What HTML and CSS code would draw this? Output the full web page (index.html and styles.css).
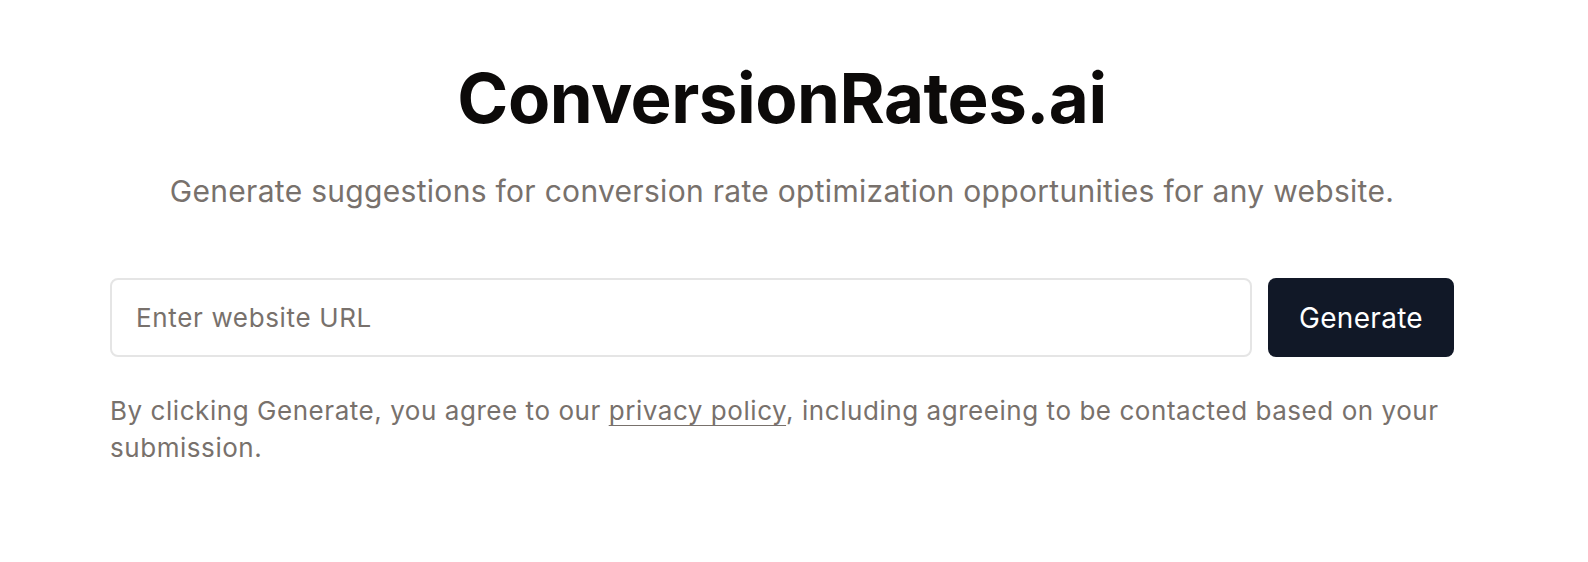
FILE: index.html
```html
<!DOCTYPE html>
<html lang="en">
<head>
<meta charset="utf-8">
<title>ConversionRates.ai</title>
<link rel="stylesheet" href="styles.css">
</head>
<body>
<main class="page">
  <h1 class="title">ConversionRates.ai</h1>
  <p class="subtitle">Generate suggestions for conversion rate optimization opportunities for any website.</p>
  <form class="form">
    <input class="url-input" type="text" placeholder="Enter website URL">
    <button class="btn" type="button">Generate</button>
  </form>
  <p class="note">By clicking Generate, you agree to our <a class="link" href="#">privacy policy</a>, including agreeing to be contacted based on your submission.</p>
</main>
</body>
</html>
```

FILE: styles.css
```css
* { box-sizing: border-box; }
html, body { margin: 0; padding: 0; background: #ffffff; }
body {
  font-family: Inter, "Noto Sans", sans-serif;
  color: #78716c;
}
.page {
  width: 1344px;
  margin-left: 110px;
  padding-top: 58px;
  display: flex;
  flex-direction: column;
}
.title {
  margin: 0;
  text-align: center;
  font-size: 69px;
  line-height: 80px;
  font-weight: 700;
  color: #0c0a09;
  letter-spacing: -0.5px;
}
.subtitle {
  margin: 33px 0 0;
  text-align: center;
  font-size: 30px;
  line-height: 40px;
  letter-spacing: 0.3px;
  color: #78716c;
}
.form {
  margin-top: 67px;
  display: flex;
  gap: 16px;
}
.url-input {
  flex: 1;
  height: 79px;
  border: 2px solid #e5e5e5;
  border-radius: 8px;
  padding: 0 24px;
  font-family: inherit;
  font-size: 26px;
  letter-spacing: 0.65px;
  color: #1c1917;
  outline: none;
}
.url-input::placeholder { color: #78716c; }
.btn {
  width: 186px;
  height: 79px;
  border: none;
  border-radius: 8px;
  background: #111827;
  color: #ffffff;
  font-family: inherit;
  font-size: 28px;
  letter-spacing: 0.3px;
  font-weight: 400;
}
.note {
  margin: 35px 0 0;
  font-size: 26px;
  line-height: 37px;
  letter-spacing: 0.55px;
  color: #78716c;
}
.link {
  color: #78716c;
  text-decoration: underline;
  text-underline-offset: 5px;
  text-decoration-thickness: 1px;
}
```
